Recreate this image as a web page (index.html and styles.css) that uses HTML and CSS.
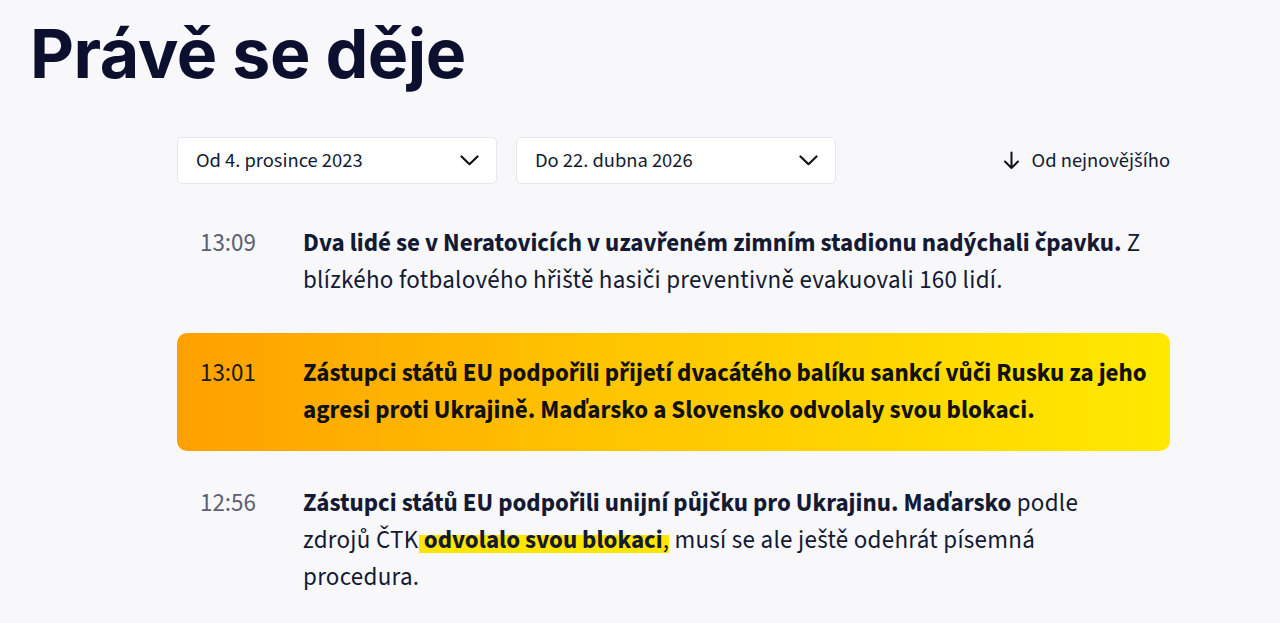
FILE: index.html
```html
<!DOCTYPE html>
<html lang="cs">
<head>
<meta charset="utf-8">
<title>Právě se děje</title>
<link rel="stylesheet" href="styles.css">
</head>
<body>
<div class="page">
  <h1 class="title">Právě se děje</h1>
  <div class="feed">
    <div class="filters">
      <button class="select"><span>Od 4. prosince 2023</span>
        <svg class="chev" width="19" height="11" viewBox="0 0 19 11"><path d="M1.5 1.5 L9.5 9.2 L17.5 1.5" fill="none" stroke="#111" stroke-width="2.2" stroke-linecap="round" stroke-linejoin="round"/></svg>
      </button>
      <button class="select"><span>Do 22. dubna 2026</span>
        <svg class="chev" width="19" height="11" viewBox="0 0 19 11"><path d="M1.5 1.5 L9.5 9.2 L17.5 1.5" fill="none" stroke="#111" stroke-width="2.2" stroke-linecap="round" stroke-linejoin="round"/></svg>
      </button>
      <button class="sort">
        <svg width="17" height="19" viewBox="0 0 17 19"><path d="M8.5 1.5 V17 M2 10.5 L8.5 17 L15 10.5" fill="none" stroke="#111" stroke-width="2" stroke-linecap="round" stroke-linejoin="round"/></svg>
        <span>Od nejnovějšího</span>
      </button>
    </div>
    <ul class="items">
      <li class="item">
        <time class="time">13:09</time>
        <p class="text"><b>Dva lidé se v Neratovicích v uzavřeném zimním stadionu nadýchali čpavku.</b> Z blízkého fotbalového hřiště hasiči preventivně evakuovali 160 lidí.</p>
      </li>
      <li class="item item-hot">
        <time class="time">13:01</time>
        <p class="text"><b>Zástupci států EU podpořili přijetí dvacátého balíku sankcí vůči Rusku za jeho agresi proti Ukrajině. Maďarsko a Slovensko odvolaly svou blokaci.</b></p>
      </li>
      <li class="item">
        <time class="time">12:56</time>
        <p class="text"><b>Zástupci států EU podpořili unijní půjčku pro Ukrajinu. Maďarsko</b> podle zdrojů ČTK<mark class="mark"> <b>odvolalo svou blokaci</b>,</mark> musí se ale ještě odehrát písemná procedura.</p>
      </li>
    </ul>
  </div>
</div>
</body>
</html>
```

FILE: styles.css
```css
html, body {
  margin: 0;
  padding: 0;
  background: #f8f8fb;
}
body {
  font-family: "Source Sans 3", "Lato", "Liberation Sans", sans-serif;
  color: #141a33;
}
.page {
  padding: 12px 30px 0 30px;
}
.title {
  margin: 0;
  font-family: "Inter", "Open Sans", sans-serif;
  font-weight: 700;
  font-size: 68px;
  line-height: 82px;
  letter-spacing: -0.5px;
  color: #0c0f2e;
}
.feed {
  margin: 43px 0 0 147px;
  width: 993px;
}
.filters {
  display: flex;
  align-items: center;
  gap: 19px;
}
.select {
  display: flex;
  align-items: center;
  justify-content: space-between;
  width: 320px;
  height: 47px;
  padding: 0 17px 0 18px;
  background: #fff;
  border: 1px solid #e6e7ee;
  border-radius: 5px;
  font-family: inherit;
  font-size: 20.5px;
  color: #141a33;
  box-sizing: border-box;
}
.sort {
  margin-left: auto;
  display: flex;
  align-items: center;
  gap: 12px;
  background: none;
  border: 0;
  padding: 0;
  font-family: inherit;
  font-size: 20.5px;
  color: #141a33;
}
.items {
  list-style: none;
  margin: 19px 0 0 0;
  padding: 0;
  display: flex;
  flex-direction: column;
  gap: 12px;
}
.item {
  display: flex;
  padding: 22px 23px;
  border-radius: 10px;
}
.item-hot {
  background: linear-gradient(90deg, #ffa000 0%, #ffc200 40%, #ffe900 100%);
}
.time {
  flex: 0 0 103px;
  font-size: 25px;
  line-height: 37px;
  color: #5b6072;
}
.item-hot .time {
  color: #1a1a1a;
}
.text {
  margin: 0;
  font-size: 25px;
  line-height: 37px;
  letter-spacing: 0.28px;
}
.text b {
  letter-spacing: 0;
}
.item-hot .text {
  color: #111;
}
.mark {
  color: inherit;
  background: linear-gradient(180deg, transparent 37%, #ffe600 37%, #ffe600 85%, transparent 85%);
}
```
